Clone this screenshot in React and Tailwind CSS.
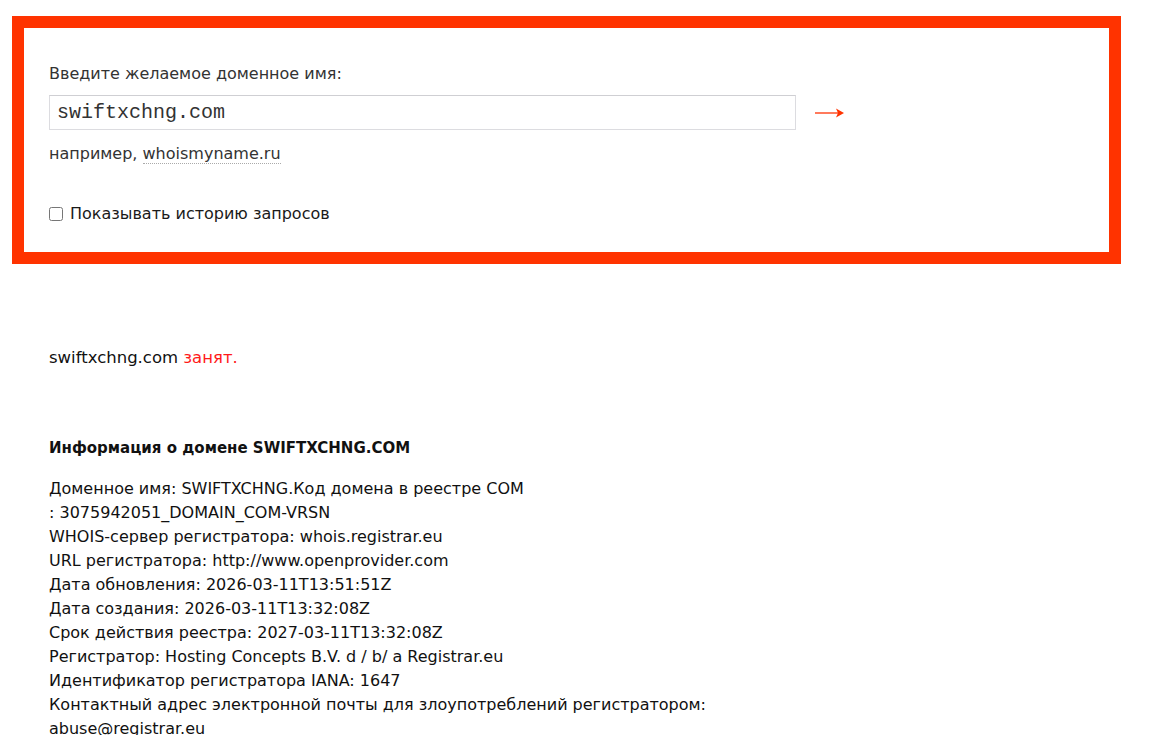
import React from "react";

const rows = [
  "Доменное имя: SWIFTXCHNG.Код домена в реестре COM",
  ": 3075942051_DOMAIN_COM-VRSN",
  "WHOIS-сервер регистратора: whois.registrar.eu",
  "URL регистратора: http://www.openprovider.com",
  "Дата обновления: 2026-03-11T13:51:51Z",
  "Дата создания: 2026-03-11T13:32:08Z",
  "Срок действия реестра: 2027-03-11T13:32:08Z",
  "Регистратор: Hosting Concepts B.V. d / b/ a Registrar.eu",
  "Идентификатор регистратора IANA: 1647",
  "Контактный адрес электронной почты для злоупотреблений регистратором:",
  "abuse@registrar.eu",
];

function Arrow() {
  return (
    <svg width="30" height="12" viewBox="0 0 30 12" aria-hidden="true">
      <line x1="0" y1="6" x2="24" y2="6" stroke="#ff7a5c" strokeWidth="2" />
      <path d="M21 1.5 L29 6 L21 10.5 L23 6 Z" fill="#ff3300" />
    </svg>
  );
}

export default function App() {
  return (
    <div className="min-h-[735px] bg-white pt-4 pl-3 font-['DejaVu_Sans',sans-serif]">
      <form
        className="w-[1109px] h-[248px] border-[12px] border-[#ff3300] pl-[25px] pt-[36px] text-[#333]"
        onSubmit={(e) => e.preventDefault()}
      >
        <label className="block text-[16px] leading-[20px]">Введите желаемое доменное имя:</label>
        <div className="mt-[11px] flex items-center">
          <input
            type="text"
            defaultValue="swiftxchng.com"
            className="w-[747px] h-[35px] border border-[#dcdce0] border-t-[#cfcfd3] bg-white px-[7px] font-['Liberation_Mono',monospace] text-[20px] text-[#333] outline-none"
          />
          <button type="submit" className="ml-[19px] mt-[1px] flex items-center">
            <Arrow />
          </button>
        </div>
        <p className="mt-[14px] text-[16px] leading-[20px]">
          например,{" "}
          <a className="border-b border-dotted border-[#aaa] text-[#333]">whoismyname.ru</a>
        </p>
        <label className="mt-[40px] flex items-center gap-[7px] text-[16px] leading-[20px] text-[#1a1a1a]">
          <input type="checkbox" className="w-[14px] h-[14px] m-0" />
          Показывать историю запросов
        </label>
      </form>

      <div className="pl-[37px] text-[#111] text-[16px]">
        <p className="mt-[84px] text-[16.5px] leading-[20px]">
          swiftxchng.com <span className="text-[#ff1a1a]">занят.</span>
        </p>
        <h3 className="mt-[70px] font-bold text-[15px] leading-[20px]">Информация о домене SWIFTXCHNG.COM</h3>
        <div className="mt-[19px] leading-[24px]">
          {rows.map((r) => (
            <div key={r}>{r}</div>
          ))}
        </div>
      </div>
    </div>
  );
}
